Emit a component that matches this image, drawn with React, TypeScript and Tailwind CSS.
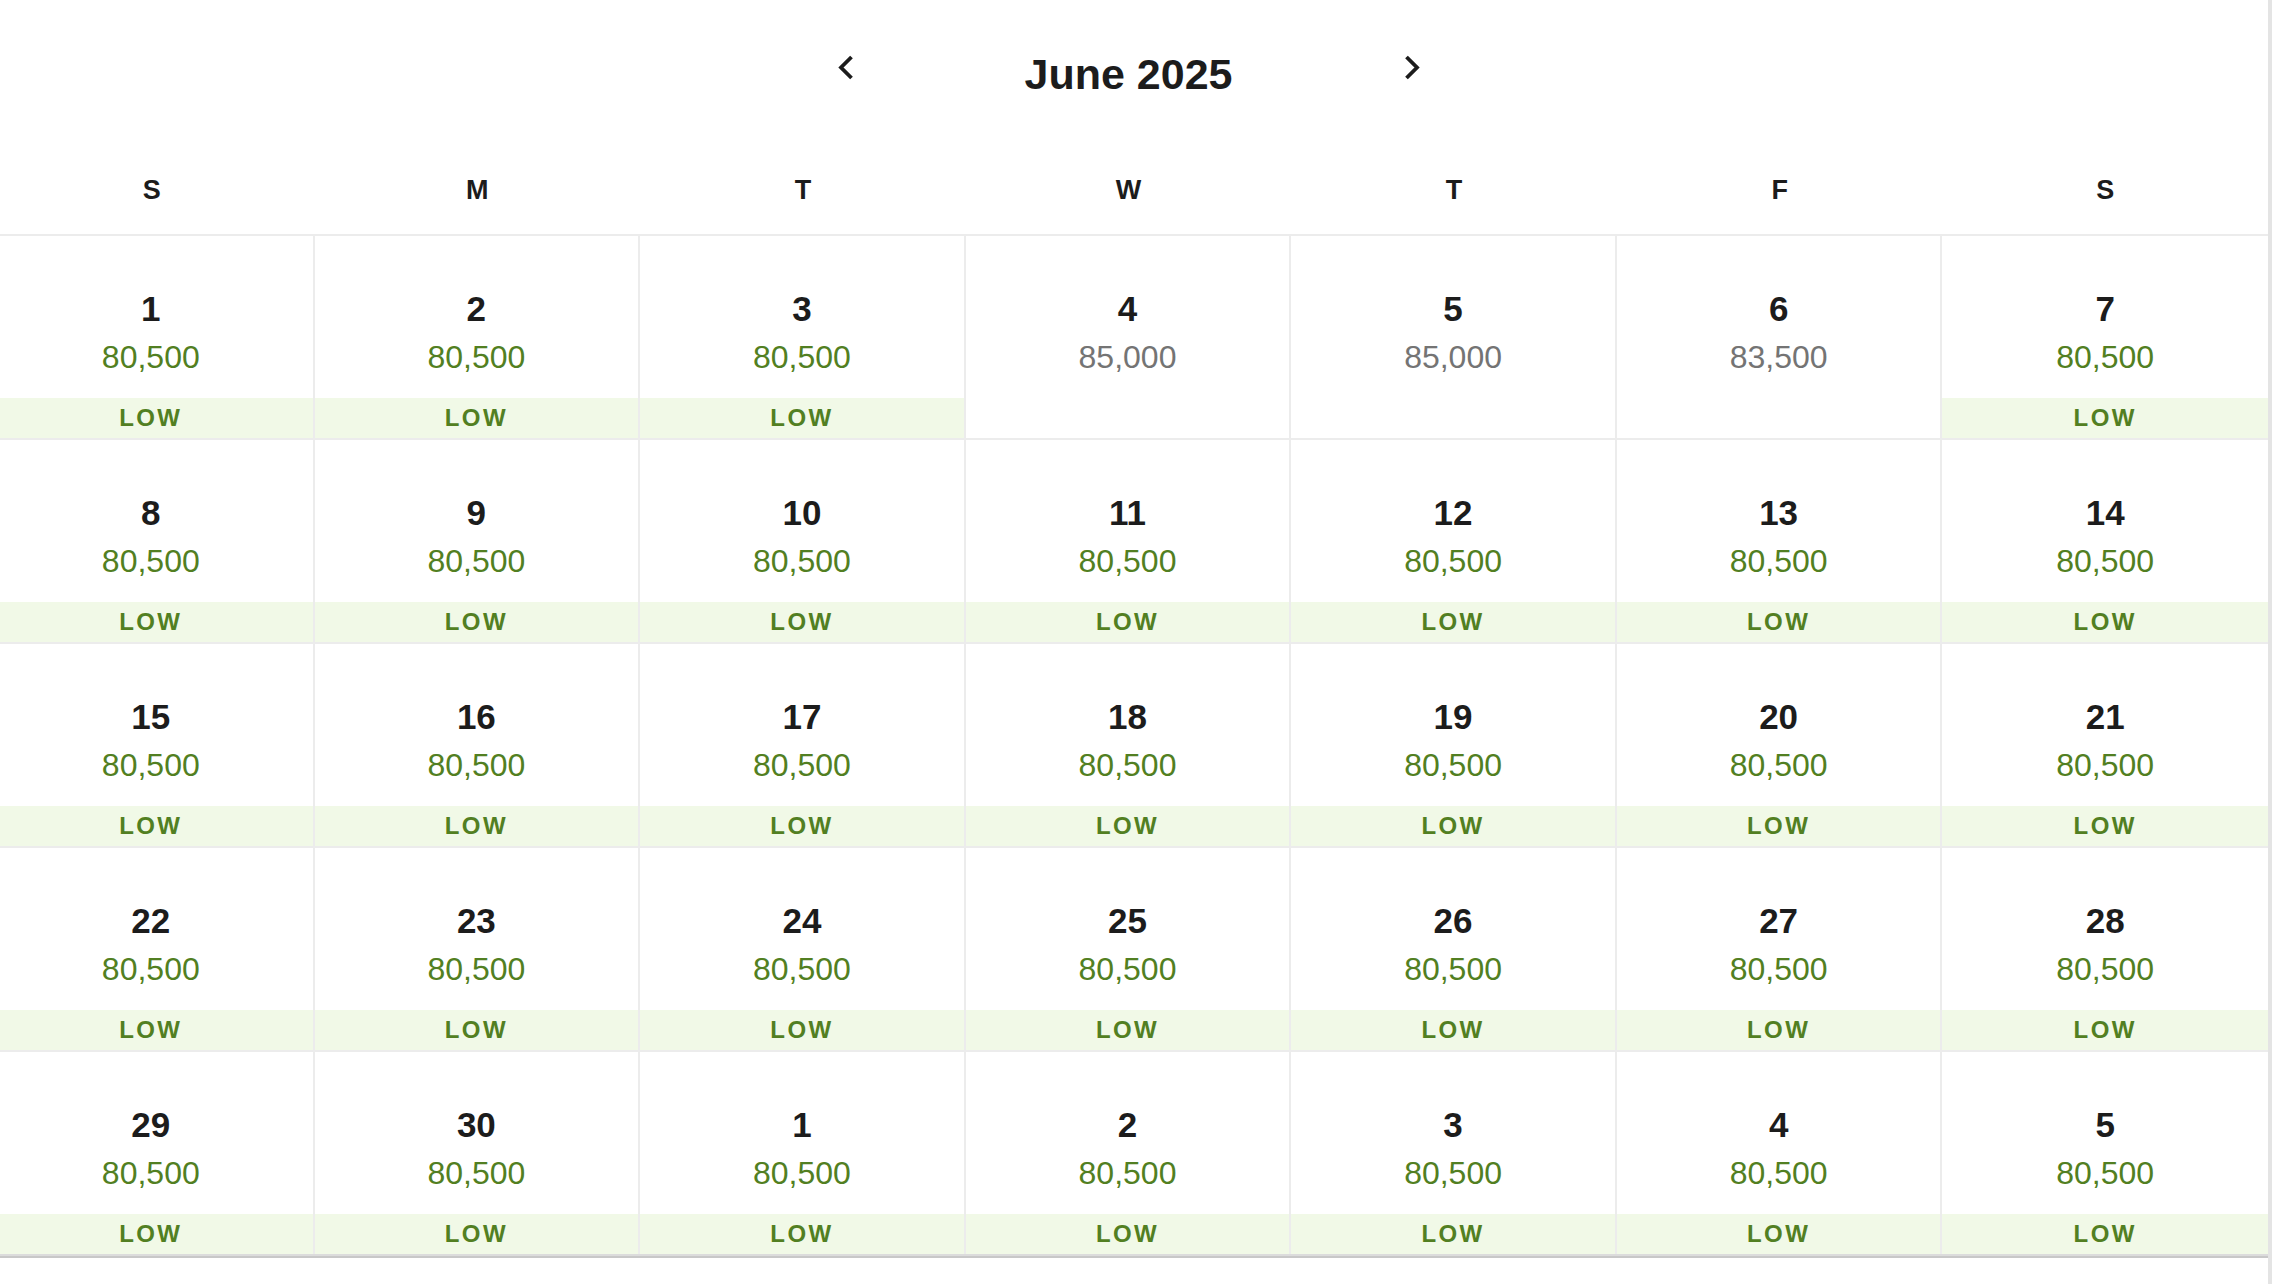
import React from 'react';

type Day = {
  day: number;
  price: string;
  low: boolean;
};

const weekdays = ['S', 'M', 'T', 'W', 'T', 'F', 'S'];

const lowDay = (day: number): Day => ({ day, price: '80,500', low: true });

const weeks: Day[][] = [
  [
    lowDay(1),
    lowDay(2),
    lowDay(3),
    { day: 4, price: '85,000', low: false },
    { day: 5, price: '85,000', low: false },
    { day: 6, price: '83,500', low: false },
    lowDay(7),
  ],
  [8, 9, 10, 11, 12, 13, 14].map(lowDay),
  [15, 16, 17, 18, 19, 20, 21].map(lowDay),
  [22, 23, 24, 25, 26, 27, 28].map(lowDay),
  [29, 30, 1, 2, 3, 4, 5].map(lowDay),
];

const Chevron = ({ dir }: { dir: 'left' | 'right' }) => (
  <svg width="16" height="25" viewBox="0 0 16 25" className="mt-[3px] shrink-0">
    <polyline
      points={dir === 'left' ? '13.5,2 3,12.5 13.5,23' : '2.5,2 13,12.5 2.5,23'}
      fill="none"
      stroke="#1c1c1c"
      strokeWidth="3.8"
      strokeLinejoin="miter"
    />
  </svg>
);

const DayCell = ({ d, last }: { d: Day; last: boolean }) => (
  <div className={`flex flex-col items-center ${last ? '' : 'border-r-2 border-[#ececec]'}`}>
    {/* date + points */}
    <div className="pt-[55px] text-[35px] leading-[35px] font-semibold text-[#1c1c1c]">{d.day}</div>
    <div
      className={`mt-[15px] text-[32px] leading-[32px] ${d.low ? 'text-[#527f22]' : 'text-[#747474]'}`}
    >
      {d.price}
    </div>
    {d.low && (
      <div className="mt-auto h-[40px] w-full bg-[#f1f9e7] flex items-center justify-center text-[24px] leading-none font-semibold tracking-[0.1em] text-[#527f22]">
        LOW
      </div>
    )}
  </div>
);

export default function App() {
  return (
    <div
      className="flex h-[1284px] w-[2272px] overflow-hidden bg-white"
      style={{ fontFamily: '"Liberation Sans", Arial, sans-serif' }}
    >
      <div className="w-[2268px] overflow-hidden">
        <div className="ml-[-11px] w-[2279px]">
          {/* month nav */}
          <div className="h-[97px] pt-[52px] flex items-start justify-center">
            <Chevron dir="left" />
            <div className="w-[550px] text-center text-[43px] leading-[44px] font-semibold text-[#1c1c1c]">
              June 2025
            </div>
            <Chevron dir="right" />
          </div>

          {/* weekday header */}
          <div className="grid grid-cols-7 pt-[79px] pb-[30px] border-b-2 border-[#ececec]">
            {weekdays.map((w, i) => (
              <div key={i} className="text-center text-[27px] leading-[28px] font-semibold text-[#1c1c1c]">
                {w}
              </div>
            ))}
          </div>

          {/* weeks */}
          {weeks.map((week, wi) => (
            <div
              key={wi}
              className={`grid grid-cols-7 ${
                wi < weeks.length - 1 ? 'h-[204px] border-b-2 border-[#ececec]' : 'h-[202px]'
              }`}
            >
              {week.map((d, di) => (
                <DayCell key={di} d={d} last={di === 6} />
              ))}
            </div>
          ))}
          <div className="h-[2px] bg-[#dcdcdc]" />
          <div className="h-[2px] bg-[#c8c8c8]" />
        </div>
      </div>
      <div className="w-[4px] bg-[#e4e4e4]" />
    </div>
  );
}
